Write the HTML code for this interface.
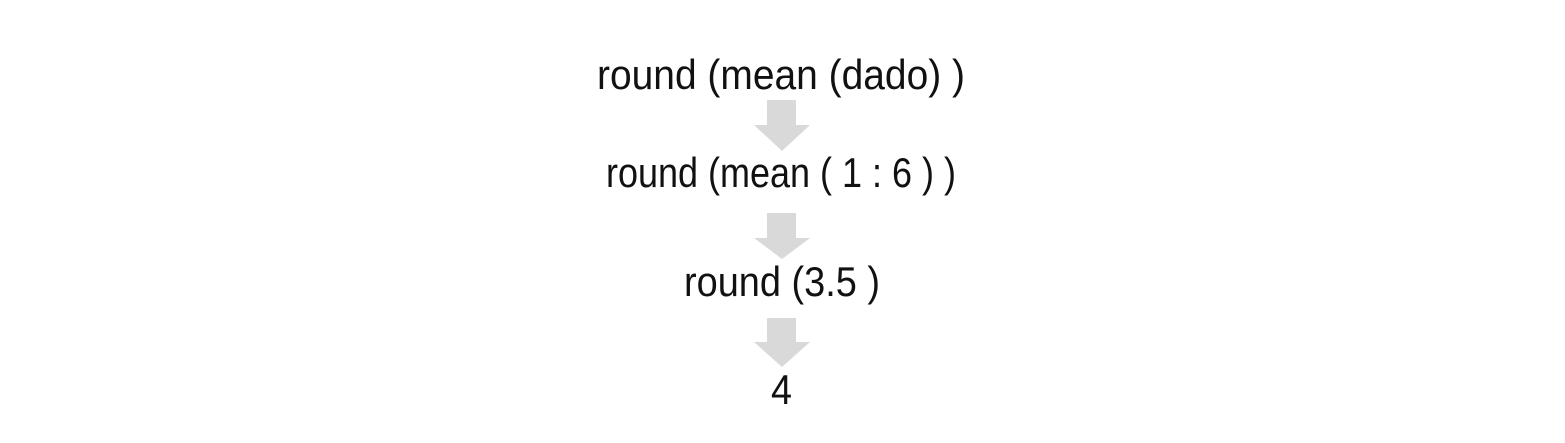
<!DOCTYPE html>
<html><head><style>html,body{margin:0;padding:0;background:#fff;width:1565px;height:443px;overflow:hidden}</style></head>
<body>
<svg width="1565" height="443" xmlns="http://www.w3.org/2000/svg" font-family="Liberation Sans, sans-serif" font-size="42" fill="#111">
<text x="597" y="89" textLength="368" lengthAdjust="spacingAndGlyphs">round (mean (dado) )</text>
<text x="606" y="187" textLength="350" lengthAdjust="spacingAndGlyphs">round (mean ( 1 : 6 ) )</text>
<text x="684" y="296" textLength="196" lengthAdjust="spacingAndGlyphs">round (3.5 )</text>
<text x="771" y="404" textLength="21" lengthAdjust="spacingAndGlyphs">4</text>
<g fill="#d9d9d9">
<path d="M767 100H796V125H810L782 151L754 125H767Z"/>
<path d="M767 213H796V238H810L782 259L754 238H767Z"/>
<path d="M767 318H796V342H810L782 367L754 342H767Z"/>
</g>
</svg>
</body></html>
